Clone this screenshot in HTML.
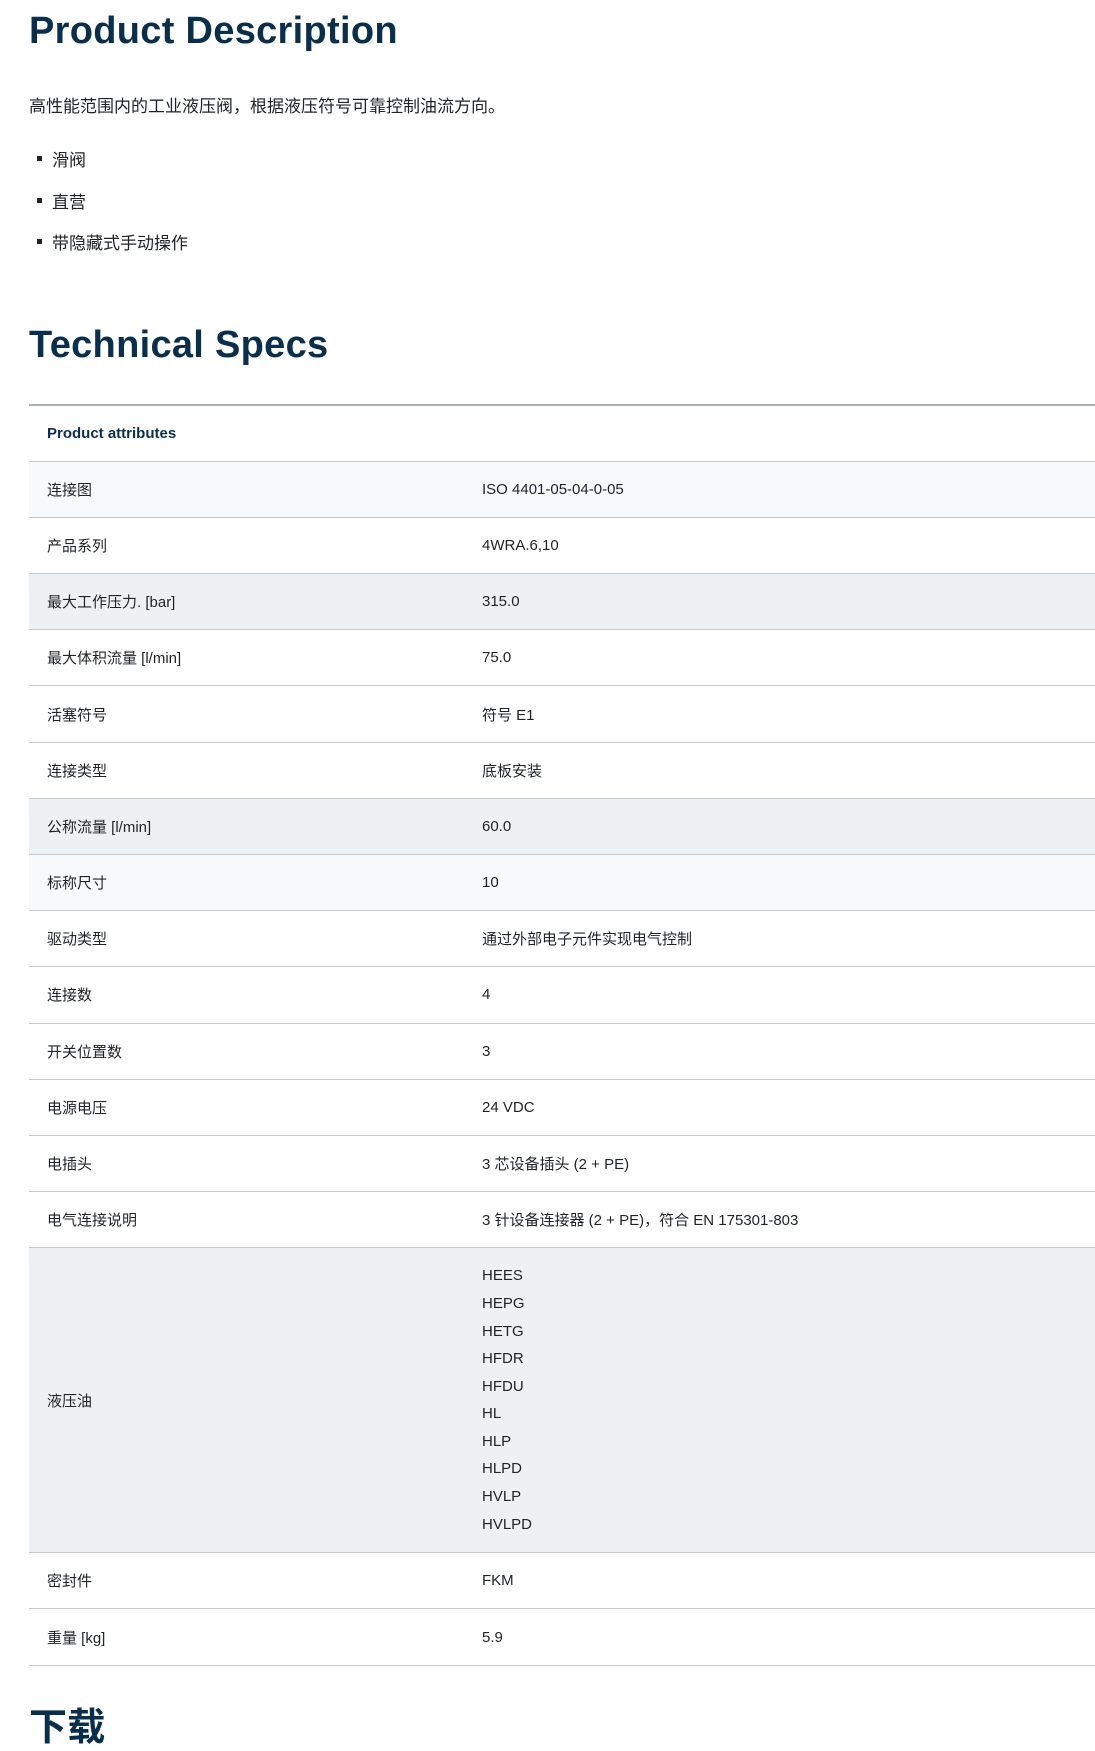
<!DOCTYPE html>
<html><head><meta charset="utf-8"><style>
*{margin:0;padding:0;box-sizing:border-box}
body{width:1095px;height:1710px;overflow:hidden;background:#fff;font-family:"Liberation Sans","Noto Sans CJK SC",sans-serif;color:#1f2326;position:relative}
h1{position:absolute;left:29px;font-size:38px;font-weight:bold;color:#0a2f4c;letter-spacing:0.3px}
.p{position:absolute;left:29px;top:92px;font-size:17px}
.li{position:absolute;left:37px;font-size:17px}
.li:before{content:"";position:absolute;left:0;top:10px;width:5px;height:5px;background:#1f2326}
.li span{margin-left:15px}
table{position:absolute;left:29px;top:404px;width:1066px;border-collapse:collapse;font-size:15px}
td,th{border-top:1.5px solid #c4c9ce;height:56.2px;padding:0 0 0 18px;text-align:left;vertical-align:middle}
th{font-weight:bold;color:#0a2f4c;font-size:15px;border-top:2px solid #a9b0b6}
td:first-child{width:435px}
tr.g td{background:#eef1f4}
tr.l td{background:#f8f9fb}
tr.last td{border-bottom:1.5px solid #c4c9ce}
td.hl{line-height:27.6px;padding:14px 0 14px 18px}
</style></head><body>
<h1 style="top:10px">Product Description</h1>
<div class="p">高性能范围内的工业液压阀，根据液压符号可靠控制油流方向。</div>
<div class="li" style="top:146px"><span>滑阀</span></div>
<div class="li" style="top:188px"><span>直营</span></div>
<div class="li" style="top:229px"><span>带隐藏式手动操作</span></div>
<h1 style="top:324px">Technical Specs</h1>
<table>
<tr><th colspan="2">Product attributes</th></tr>
<tr class="l"><td>连接图</td><td>ISO 4401-05-04-0-05</td></tr>
<tr><td>产品系列</td><td>4WRA.6,10</td></tr>
<tr class="g"><td>最大工作压力. [bar]</td><td>315.0</td></tr>
<tr><td>最大体积流量 [l/min]</td><td>75.0</td></tr>
<tr><td>活塞符号</td><td>符号 E1</td></tr>
<tr><td>连接类型</td><td>底板安装</td></tr>
<tr class="g"><td>公称流量 [l/min]</td><td>60.0</td></tr>
<tr class="l"><td>标称尺寸</td><td>10</td></tr>
<tr><td>驱动类型</td><td>通过外部电子元件实现电气控制</td></tr>
<tr><td>连接数</td><td>4</td></tr>
<tr><td>开关位置数</td><td>3</td></tr>
<tr><td>电源电压</td><td>24 VDC</td></tr>
<tr><td>电插头</td><td>3 芯设备插头 (2 + PE)</td></tr>
<tr><td>电气连接说明</td><td>3 针设备连接器 (2 + PE)，符合 EN 175301-803</td></tr>
<tr class="g"><td style="height:304px">液压油</td><td class="hl">HEES<br>HEPG<br>HETG<br>HFDR<br>HFDU<br>HL<br>HLP<br>HLPD<br>HVLP<br>HVLPD</td></tr>
<tr><td>密封件</td><td>FKM</td></tr>
<tr class="last"><td>重量 [kg]</td><td>5.9</td></tr>
</table>
<h1 style="top:1696px">下载</h1>
</body></html>
